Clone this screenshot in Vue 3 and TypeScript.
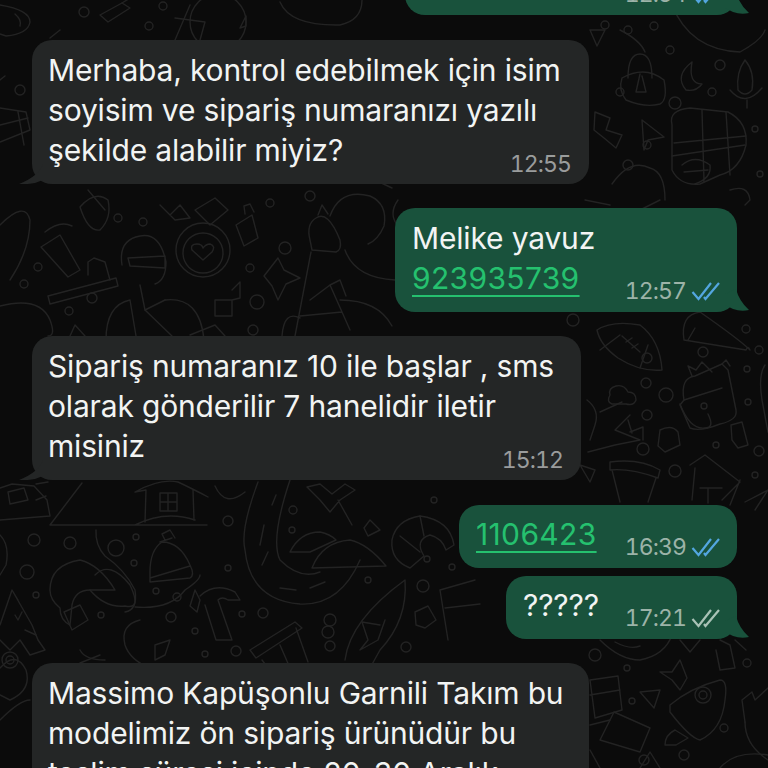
<template>
  <div class="chat">
    <svg class="doodles" width="768" height="768" viewBox="0 0 768 768" fill="none">
      <path v-for="(d, i) in doodlePaths" :key="i" :d="d" />
      <circle v-for="(c, i) in doodleDots" :key="'c' + i" :cx="c[0]" :cy="c[1]" :r="c[2]" />
    </svg>

    <div class="thread">
      <div
        v-for="msg in messages"
        :key="msg.id"
        class="bubble"
        :class="[msg.sent ? 'sent' : 'received', { single: msg.single }]"
        :style="{ width: msg.width + 'px', marginTop: msg.top + 'px' }"
      >
        <div class="body">
          <div v-for="line in msg.lines" :key="line">{{ line }}</div>
          <a v-if="msg.link" class="link">{{ msg.link }}</a>
        </div>
        <div v-if="msg.time" class="meta">
          <span>{{ msg.time }}</span>
          <svg v-if="msg.sent" class="ticks" :class="{ read: msg.read }" width="30" height="20" viewBox="0 0 30 20" fill="none">
            <path d="M1.5 11 L7.5 18 L20 2" />
            <path d="M13 16 L14.5 18 L28 2" />
          </svg>
        </div>
        <svg v-if="msg.tail" class="tail" width="24" height="24" viewBox="0 0 24 24">
          <path v-if="msg.sent" d="M0 5 L11 0 Q14 12 24 21 Q16 23 8 20 Q4 18 0 16 Z" />
          <path v-else d="M24 4 Q20 16 0 24 Q14 25 24 20 Z" />
        </svg>
      </div>
    </div>
  </div>
</template>

<script setup lang="ts">
interface Message {
  id: number
  sent: boolean
  lines: string[]
  link?: string
  time?: string
  read?: boolean
  tail?: boolean
  single?: boolean
  width: number
  top: number
}

const messages: Message[] = [
  { id: 1, sent: true, lines: [''], time: '12:54', read: true, tail: true, width: 332, top: -48 },
  {
    id: 2,
    sent: false,
    lines: ['Merhaba, kontrol edebilmek için isim', 'soyisim ve sipariş numaranızı yazılı', 'şekilde alabilir miyiz?'],
    time: '12:55',
    tail: true,
    width: 557,
    top: 25
  },
  { id: 3, sent: true, lines: ['Melike yavuz'], link: '923935739', time: '12:57', read: true, tail: true, width: 342, top: 24 },
  {
    id: 4,
    sent: false,
    lines: ['Sipariş numaranız 10 ile başlar , sms', 'olarak gönderilir 7 hanelidir iletir', 'misiniz'],
    time: '15:12',
    tail: true,
    width: 549,
    top: 24
  },
  { id: 5, sent: true, lines: [], link: '1106423', time: '16:39', read: true, single: true, width: 278, top: 25 },
  { id: 6, sent: true, lines: ['?????'], time: '17:21', tail: true, single: true, width: 231, top: 8 },
  {
    id: 7,
    sent: false,
    lines: ['Massimo Kapüşonlu Garnili Takım bu', 'modelimiz ön sipariş ürünüdür bu', 'teslim süresi içinde 20-30 Aralık'],
    width: 557,
    top: 24
  }
]

// wallpaper, drawn by hand in page coordinates
const doodlePaths: string[] = [
  // top left
  'M0 5 Q30 10 30 22 Q28 34 6 36 L0 34', 'M15 14 Q22 20 20 26', 'M100 15 L122 3 L130 8 L108 22 Z', 'M122 3 L135 -5',
  'M190 5 L175 40', 'M175 18 L205 22 L200 40', 'M60 30 L50 38', 'M218 22 m28 0 a28 28 0 1 0 -56 0 a28 28 0 1 0 56 0',
  'M280 2 Q290 26 340 25 Q362 20 362 0', 'M246 16 L240 28 L246 26 Z',
  'M0 80 L5 76 M0 108 L26 112 L30 130 L0 142 M0 125 L28 118 M18 112 L24 145',
  // upper right
  'M672 5 Q690 50 740 52 Q762 40 765 30', 'M620 30 Q640 40 645 52', 'M590 30 L605 30 L597 46 Z',
  'M628 78 Q628 54 640 54 Q652 54 652 78 M622 78 Q645 65 664 80 Q668 100 660 104 Q645 108 626 100 Q618 90 622 78',
  'M640 74 L636 92 L646 92 L642 76', 'M692 62 Q674 76 686 90 Q696 92 702 84 Q688 84 692 62',
  'M745 60 Q755 72 752 90 Q745 98 738 90 Q736 72 745 60 M730 90 Q745 108 762 88 M747 100 L747 108',
  'M595 112 L610 118 L606 130 L622 135 L616 148 L604 138 L594 130 Z', 'M642 120 L664 137 L648 140 L644 150 Z',
  'M672 125 Q668 110 690 108 L728 112 Q748 122 746 145 Q740 170 720 175 L700 184 Q680 186 672 170 Q672 140 672 125 Z',
  'M702 110 L704 182 M674 143 L746 136 M672 156 L745 145 M726 112 L730 175 M682 165 Q695 154 710 165 Q712 178 695 184 M684 172 L708 170',
  'M612 184 Q630 158 650 168 Q665 172 665 200', 'M730 190 Q748 184 750 200 L745 205',
  // middle left
  'M41 247 L60 235 L80 270 L68 277 Z', 'M88 275 L88 262 L94 258 L105 262 L110 280',
  'M48 296 L116 278 L118 286 L50 304 Z', 'M72 226 Q60 220 45 232', 'M0 225 Q25 200 30 220 Q30 250 10 280',
  'M80 207 Q95 190 108 200 Q112 218 100 230 Q88 232 80 207',
  'M88 190 L105 210', 'M160 205 L170 215 L180 205 L190 218 L175 220 Z', 'M195 210 L215 198 L228 210 L210 225 Z',
  'M236 225 L252 215 L258 238 L244 246 Z', 'M245 214 L244 206 L250 204 L254 212',
  'M203 250 m27 0 a27 27 0 1 0 -54 0 a27 27 0 1 0 54 0', 'M203 253 m20 0 a20 20 0 1 0 -40 0 a20 20 0 1 0 40 0',
  'M203 260 L192 250 Q190 244 197 244 Q202 244 203 248 Q206 244 210 244 Q216 246 212 252 Z',
  'M122 265 Q118 240 140 236 Q160 232 166 262 Q166 280 155 284 M128 258 L165 256 L165 268 L130 266 Z M140 285 L145 310 L165 300',
  'M106 340 Q106 305 130 300 L136 336 M165 300 Q200 296 204 340 M145 310 L172 336', 'M190 335 L215 325 L225 336',
  'M264 276 L278 258 L284 270 L300 278 L286 284 L278 300 L272 286 Z', 'M215 300 L232 300 L232 316 L215 316 Z M232 290 L240 282 L240 298 L232 300',
  'M0 306 Q40 296 50 320 Q56 336 48 336', 'M70 336 L75 325 L85 336',
  'M330 216 Q340 188 370 196 Q388 204 384 226 Q378 240 368 244',
  'M310 240 Q306 224 316 218 Q328 210 340 240 Q342 250 336 252 L312 250 Z', 'M318 215 L322 205 L328 214',
  'M345 250 Q355 278 395 280', 'M311 252 L295 336 M310 300 L330 285 L350 330 M300 316 L342 312 M330 285 L340 280 L346 296',
  'M282 336 Q284 310 300 318', 'M340 300 Q378 300 392 326',
  // right middle
  'M597 330 Q612 320 640 325 Q660 340 662 370 Q640 372 618 358 Q600 345 597 330 Z', 'M620 335 L600 350 M648 345 L640 368 M622 336 L640 352 M626 342 L632 338 M632 348 L638 344',
  'M684 340 Q680 315 700 312 Q740 340 750 350 Q748 345 746 350 L684 340',
  'M695 328 L688 340', 'M610 395 Q608 388 616 386 Q624 384 628 392 Q636 392 636 400 Q634 406 626 404 L612 404 Q606 402 610 395 Z',
  'M684 400 Q680 378 695 376 L722 364 L728 370 L736 410 Q738 420 720 424 Q700 432 690 428 L680 405 Z', 'M684 400 L722 388',
  'M680 404 Q690 430 705 428 Q715 428 708 414', 'M692 376 L688 366 L696 370 L702 362 L712 372', 'M722 364 L726 360 L730 366',
  'M660 430 Q672 424 678 432 L680 445 L665 452 L658 446 Z', 'M731 425 L742 422 L748 445 L738 448 L732 440 Z',
  'M630 415 L615 430 L640 440 L615 445 L588 452 M600 412 L622 402', 'M630 432 L643 427 L643 440', 'M587 400 Q600 410 595 425 L590 440',
  'M632 433 L628 420', 'M580 465 L595 470 L590 482 Z',
  'M610 462 Q640 458 660 470 L658 478 Q630 468 610 470 Z M612 470 L620 502 M656 478 L648 502',
  'M690 465 L705 455 L740 482 L722 500 M695 468 L692 500 M740 480 L730 505 M700 488 L722 488 M708 488 L708 503',
  'M768 490 L745 502 M755 510 L768 490', 'M765 365 Q758 375 762 400 L768 432',
  // lower left
  'M50 525 L207 525 M50 525 L82 483 M135 525 Q165 510 195 520',
  'M145 522 L146 490 L135 492 Q160 478 178 482 Q195 490 208 497 M193 490 L194 520', 'M160 493 L177 493 L177 511 L160 511 Z M168 493 L168 511 M160 502 L177 502',
  'M0 488 L12 484 L34 486 L47 500 L50 516 L0 520 M8 492 L24 488 L28 500 L10 504 Z', 'M36 484 L48 482 M36 500 L46 496',
  'M215 486 Q225 508 245 492', 'M258 482 Q240 530 245 550 Q250 600 300 604 Q340 606 360 560',
  'M290 480 Q270 540 280 560 Q300 580 320 572', 'M272 505 L276 495 M260 545 L264 525 M262 565 L268 552 M280 588 L296 590 M310 588 L325 582',
  'M290 552 Q300 532 320 532 Q330 534 336 540 L310 552 Z', 'M312 568 Q322 542 350 540 Q368 544 386 566 Z',
  'M307 487 L320 484 L332 494 L345 484 L355 490 L340 500 L330 512 L320 500 Z M338 500 L352 525',
  'M370 520 L380 530 L368 536 L364 528 Z', 'M420 516 Q396 520 392 540 Q390 560 410 568 L424 556 Q414 540 430 535 Q442 538 446 550 L454 545 Q450 520 420 516',
  'M400 536 L420 552 M420 516 L424 536',
  'M50 590 Q50 565 80 560 Q100 565 115 590 L90 590 Q75 590 72 605 L70 625 Q60 620 60 608 Q50 600 50 590 Z',
  'M95 575 Q110 560 130 585 Q142 610 125 606 Q105 608 90 590', 'M64 612 L80 605 L88 620 L72 630 Z', 'M96 530 Q95 545 105 556 Q125 570 135 590 Q138 610 125 612',
  'M150 572 Q150 550 162 542 Q180 542 190 565 Q195 575 190 578 L150 582 Z M150 578 L190 566', 'M165 540 L162 534 L170 530 L175 538 M160 542 L172 538',
  'M135 607 Q170 610 185 590 Q200 580 200 575', 'M195 590 L200 600 L197 612 L190 606 Z', 'M200 596 Q215 582 235 592 L240 600 L228 600 Q222 596 218 600 L232 640 L216 640 L205 605',
  'M140 620 Q120 625 125 645 Q130 660 150 668 L220 665', 'M155 645 L170 640 L165 655 L155 660 Z',
  'M250 650 L295 622 L302 628 L256 658 Z M296 628 L308 662 M262 660 L268 668 M280 645 L290 668',
  'M345 660 Q350 620 405 580 Q408 620 380 650 L370 668', 'M380 625 L362 622 L368 640 L360 650 L378 640 L385 620',
  'M415 612 L428 606 L436 620 L425 628 L416 625 Z', 'M440 590 L475 580 M440 590 L448 640 M445 608 L480 604',
  'M0 625 L12 590 L18 600 M12 590 L32 625 L38 640 L45 650 L30 655 M0 640 L10 650 L20 640 L30 655',
  'M15 615 L18 620 L22 612', 'M25 630 L36 635', 'M0 535 Q10 545 6 565 L0 575', 'M80 650 Q85 660 105 660', 'M80 663 L100 655',
  // lower right
  'M600 640 Q620 660 640 660 Q665 655 672 635', 'M615 642 Q630 650 640 646', 'M680 640 L690 652 L700 640', 'M720 640 L730 645 L735 668 L720 670 L716 650 M735 640 L746 650',
  'M672 672 L680 660 L687 678 L680 690 L672 680 L660 672 Z',
  'M590 680 L618 676 L622 710 L595 718 Z M590 695 L620 690', 'M614 712 L650 728 L640 752 L600 740 Z', 'M590 725 L610 720',
  'M640 692 L660 690 L654 708 Z', 'M670 705 Q690 688 720 680 Q728 680 725 700 Q722 730 700 740 Q690 738 670 712 Z',
  'M675 730 Q665 735 665 745 L676 745 L688 738 Z', 'M703 695 m8 0 a8 8 0 1 0 -16 0 a8 8 0 1 0 16 0', 'M703 695 m4 0 a4 4 0 1 0 -8 0 a4 4 0 1 0 8 0',
  'M745 722 L742 700 L752 692 L755 700 L768 688', 'M745 722 Q745 745 768 760', 'M720 768 Q735 750 768 755',
  'M590 750 L600 768', 'M640 768 L650 752 L660 768',
  'M0 668 Q16 650 26 670 Q32 690 10 700 L0 695', 'M0 720 Q20 700 30 700',
  'M585 200 L610 205', 'M640 210 L660 200', 'M375 180 L392 188', 'M398 200 Q388 214 398 226'
]

const doodleDots: [number, number, number][] = [
  [20, 90, 5], [84, 12, 5], [149, 26, 4], [163, 6, 4], [605, 25, 4], [654, 26, 4], [628, 30, 4], [620, 92, 4],
  [675, 103, 6], [670, 50, 4], [720, 65, 5], [712, 92, 4], [755, 129, 3], [628, 165, 5], [647, 145, 4], [760, 174, 3],
  [38, 267, 4], [24, 284, 4], [69, 311, 4], [92, 298, 5], [118, 218, 4], [143, 222, 4], [285, 248, 6], [250, 268, 4],
  [270, 203, 4], [310, 196, 5], [257, 302, 7], [253, 330, 5], [573, 320, 6], [703, 352, 5], [704, 406, 3], [647, 358, 5],
  [746, 329, 4], [759, 350, 4], [747, 369, 3], [748, 402, 3], [646, 383, 5], [666, 395, 7], [647, 415, 5], [643, 449, 6],
  [675, 471, 6], [716, 445, 3], [759, 451, 5], [755, 475, 3], [34, 540, 6], [70, 543, 6], [136, 537, 3], [116, 548, 8],
  [134, 563, 3], [27, 572, 7], [36, 595, 3], [156, 591, 3], [177, 597, 4], [101, 615, 3], [171, 617, 5], [195, 631, 3],
  [228, 568, 3], [228, 521, 5], [293, 510, 4], [292, 530, 3], [263, 613, 5], [242, 614, 3], [236, 651, 5], [330, 620, 6],
  [368, 580, 3], [423, 586, 6], [434, 500, 3], [427, 559, 3], [328, 632, 6], [330, 646, 5], [406, 647, 5], [452, 567, 3],
  [10, 660, 8], [10, 660, 4], [595, 655, 6], [627, 668, 3], [747, 663, 4], [632, 701, 3], [724, 728, 4], [684, 755, 5],
  [644, 760, 5], [205, 654, 3]
]
</script>

<style>
html,
body {
  margin: 0;
  background: #0b0b0b;
}
</style>

<style scoped>
.chat {
  position: relative;
  width: 768px;
  height: 768px;
  overflow: hidden;
  background: #0b0b0b;
  font-family: Inter, "Liberation Sans", sans-serif;
}

.doodles {
  position: absolute;
  inset: 0;
  stroke: #232323;
  stroke-width: 1.4;
  stroke-linejoin: round;
  stroke-linecap: round;
}

.thread {
  position: relative;
  display: flex;
  flex-direction: column;
  padding: 0 31px 0 32px;
}

.bubble {
  position: relative;
  display: flex;
  justify-content: space-between;
  align-items: flex-end;
  box-sizing: border-box;
  flex: none;
  border-radius: 20px;
  padding: 10px 16px 14px 16px;
  font-size: 30px;
  line-height: 40px;
  letter-spacing: -0.17px;
  color: #f2f4f3;
}

.bubble.sent {
  align-self: flex-end;
  background: #19523c;
  padding-left: 17px;
}

.bubble.received {
  align-self: flex-start;
  background: #242626;
}

.bubble.single {
  line-height: 39px;
}

.body {
  min-height: 39px;
  white-space: nowrap;
}

.link {
  display: block;
  color: #25c16f;
  letter-spacing: 0.35px;
  text-decoration: underline;
  text-underline-offset: 6px;
  text-decoration-thickness: 2px;
}

.meta {
  display: flex;
  align-items: center;
  gap: 5px;
  font-size: 23px;
  line-height: 24px;
  letter-spacing: -0.9px;
  font-variant-numeric: tabular-nums;
  color: #9cb3a8;
  margin-bottom: -5px;
}

.received .meta {
  position: absolute;
  right: 18px;
  bottom: 8px;
  margin: 0;
  color: #9a9c9c;
}

.ticks {
  stroke: #a9c2b6;
  stroke-width: 2.2;
}

.ticks.read {
  stroke: #53a6e0;
}

.tail {
  position: absolute;
  bottom: 0;
}

.sent .tail {
  right: -12px;
  fill: #19523c;
  bottom: -1px;
}

.received .tail {
  left: -13px;
  fill: #242626;
}
</style>
